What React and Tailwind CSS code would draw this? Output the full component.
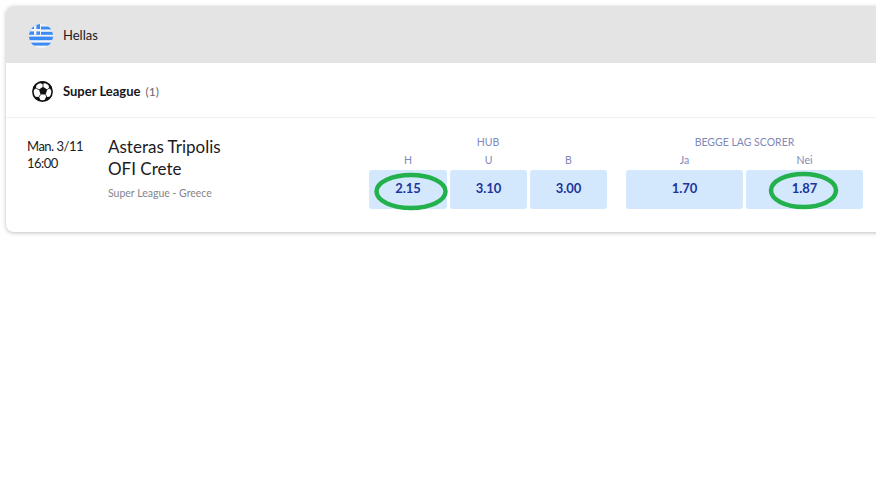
import React from 'react';

const font = { fontFamily: 'Lato, "Noto Sans", sans-serif' };

const GreeceFlag = () => (
  <svg width="24" height="24" viewBox="0 0 24 24" className="shrink-0">
    <defs>
      <clipPath id="flag-clip">
        <circle cx="12" cy="12" r="12" />
      </clipPath>
    </defs>
    <g clipPath="url(#flag-clip)">
      <rect width="24" height="24" fill="#f4f4f6" />
      <rect x="12" y="2.500" width="12" height="3" fill="#3b8bf5" />
      <rect x="12" y="7.800" width="12" height="3" fill="#3b8bf5" />
      <rect x="0" y="12.600" width="24" height="3.600" fill="#3b8bf5" />
      <rect x="0" y="18.600" width="24" height="3" fill="#3b8bf5" />
      <rect x="0" y="0" width="11" height="10.800" fill="#3b8bf5" />
      <rect x="5" y="1" width="2.400" height="9.800" fill="#f4f4f6" />
      <rect x="1" y="5" width="10" height="2.400" fill="#f4f4f6" />
    </g>
  </svg>
);

const Ball = () => (
  <svg width="21" height="21" viewBox="0 0 20 20" className="shrink-0">
    <circle cx="10" cy="10" r="9.200" fill="#fff" stroke="#111" strokeWidth="1.500" />
    <path d="M10.500 5.500l4 2.700-1.500 4.600H8.200L6.600 8.200z" fill="#111" />
    <path d="M6.500 1.300L10 3l3.500-1.700-1.500-.8H8zM.8 9.500l3-2.600.5-4.200-3 2.800zM19.200 9.500l-3-2.600-.5-4.200 3 2.800zM2.500 15l4.200.2 1.900 4-3.500-1zM17.500 15l-4.200.2-1.900 4 3.500-1z" fill="#111" />
    <path d="M10.500 5.500V3M14.500 8.200l2-1.500M13 12.800l1 2.400M8.200 12.800L6.700 15.200M6.600 8.200L4 6.900" stroke="#111" strokeWidth="0.800" fill="none" />
  </svg>
);

const Odd = ({ label, value, className }) => (
  <div className={`flex flex-col items-center ${className}`}>
    <span className="text-[10.500px] leading-[14px] text-[#8089b8]">{label}</span>
    <button className="mt-[3px] flex h-[39px] w-full items-center justify-center rounded-[3px] bg-[#d4e8fd] pb-[2px] text-[13px] font-bold text-[#1c349c]">
      {value}
    </button>
  </div>
);

export default function App() {
  return (
    <div className="relative h-[500px] w-[876px] overflow-hidden bg-white pl-[6px] pt-[6px]" style={font}>
      <div className="-mr-4 rounded-l-lg bg-white shadow-[0_1px_4px_rgba(0,0,0,0.25)]">
        <div className="flex h-[57px] items-center gap-[10px] rounded-tl-lg bg-[#e4e4e4] pl-[23px] pt-[2px]">
          <GreeceFlag />
          <span className="text-[13px] text-[#1d1a22]">Hellas</span>
        </div>

        <div className="flex h-[55px] items-center border-b border-[#f0f0f2] pl-[26px] pt-[3px]">
          <Ball />
          <span className="ml-[10px] text-[13px] font-bold text-[#18161d]">Super League</span>
          <span className="ml-[5px] text-[12px] text-[#6b6570]">(1)</span>
        </div>

        <div className="flex h-[114px] pl-[21px] pr-[29px]">
          <div className="w-[81px] pt-[20px] text-[13px] leading-[16px] tracking-[-0.5px] text-[#1d1a22]">
            <div>Man. 3/11</div>
            <div className="mt-[1px]">16:00</div>
          </div>
          <div className="w-[261px] pt-[17px]">
            <div className="text-[17px] leading-[23px] text-[#1d1a22]">Asteras Tripolis</div>
            <div className="-mt-[1px] text-[17px] leading-[23px] text-[#1d1a22]">OFI Crete</div>
            <div className="mt-[6px] text-[10.500px] leading-[14px] text-[#85858c]">Super League - Greece</div>
          </div>
          <div className="w-[238px] pt-[17px]">
            <div className="text-center text-[10.500px] leading-[14px] text-[#8089b8]">HUB</div>
            <div className="mt-[4px] flex gap-[3px]">
              <Odd label="H" value="2.15" className="w-[78px]" />
              <Odd label="U" value="3.10" className="w-[77px]" />
              <Odd label="B" value="3.00" className="w-[77px]" />
            </div>
          </div>
          <div className="ml-[19px] w-[237px] pt-[17px]">
            <div className="text-center text-[10.500px] leading-[14px] text-[#8089b8]">BEGGE LAG SCORER</div>
            <div className="mt-[4px] flex gap-[3px]">
              <Odd label="Ja" value="1.70" className="w-[117px]" />
              <Odd label="Nei" value="1.87" className="w-[117px]" />
            </div>
          </div>
        </div>
      </div>

      {/* hand drawn markers over the odds */}
      <svg width="876" height="500" className="pointer-events-none absolute left-0 top-0">
        <ellipse cx="411" cy="191.500" rx="34.500" ry="16.500" fill="none" stroke="#22b14c" strokeWidth="4.500" />
        <ellipse cx="803.500" cy="190.500" rx="32.500" ry="16.500" fill="none" stroke="#22b14c" strokeWidth="4.500" />
      </svg>
    </div>
  );
}
